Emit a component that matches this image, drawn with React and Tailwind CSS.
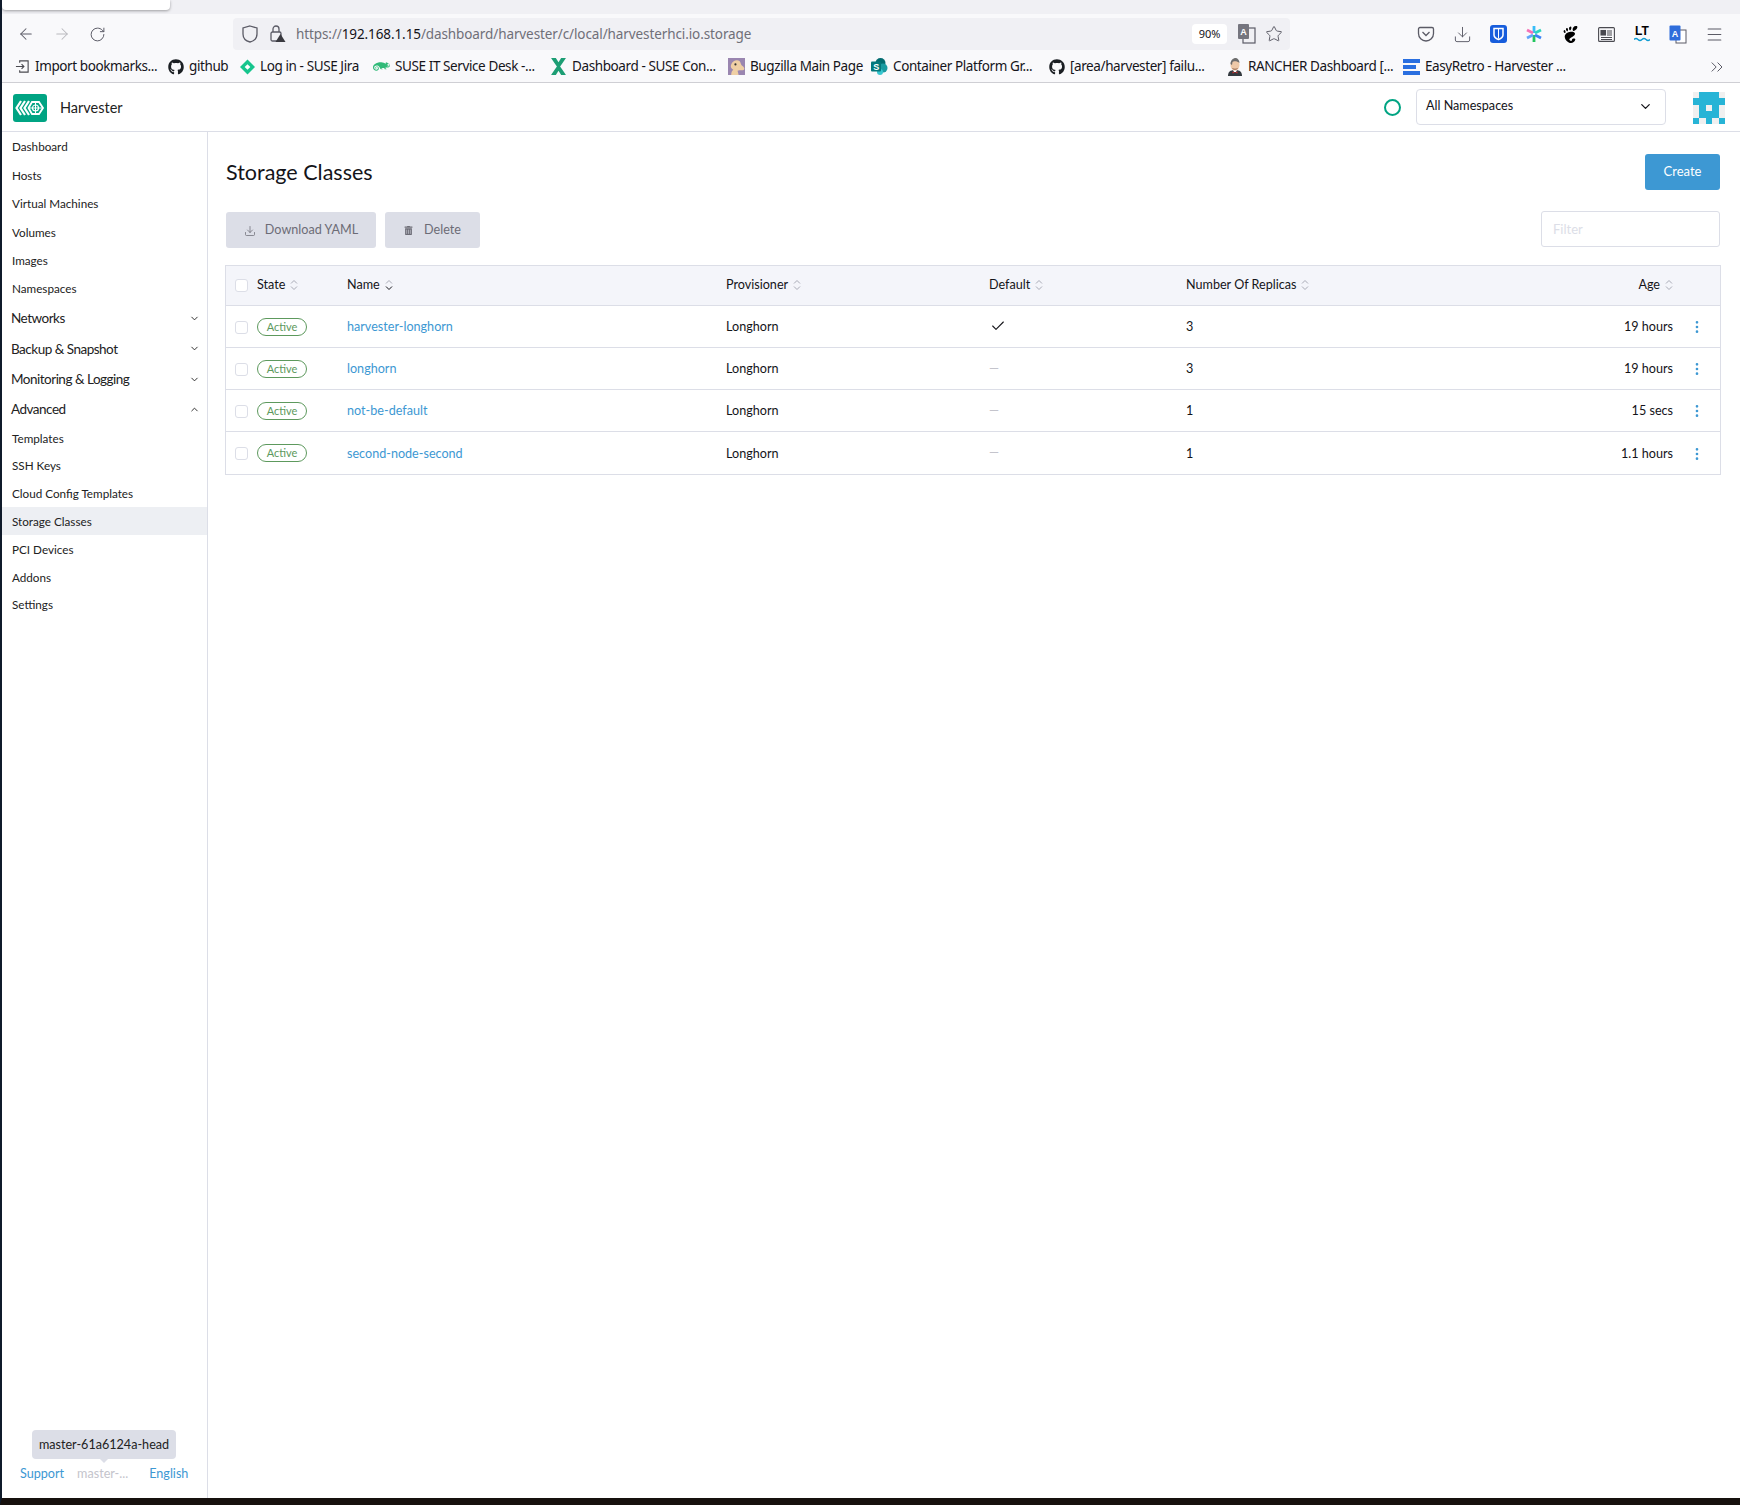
import {
  ArrowLeft,
  ArrowRight,
  Check,
  ChevronDown,
  ChevronUp,
  ChevronsRight,
  Download,
  EllipsisVertical,
  Menu,
  RotateCw,
  Star,
} from "lucide-react";
import { FaGithub, FaTrashAlt } from "react-icons/fa";
import { SiGnome, SiSuse } from "react-icons/si";

const rowCols = "grid grid-cols-[31px_90px_379px_263px_197px_387px_100px_47px] items-center";

const rows = [
  { name: "harvester-longhorn", isDefault: true, replicas: "3", age: "19 hours" },
  { name: "longhorn", isDefault: false, replicas: "3", age: "19 hours" },
  { name: "not-be-default", isDefault: false, replicas: "1", age: "15 secs" },
  { name: "second-node-second", isDefault: false, replicas: "1", age: "1.1 hours" },
];

function ImportIcon() {
  return (
    <svg width="15" height="15" viewBox="0 0 16 16" fill="none" stroke="#4a4a50" strokeWidth="1.2">
      <path d="M5 4V2h9v12H5v-2" />
      <path d="M1 8h8M7 5.5 9.5 8 7 10.5" />
    </svg>
  );
}

function JiraIcon() {
  return (
    <svg width="15" height="16" viewBox="0 0 16 16">
      <path d="M8 0l8 8-8 8-8-8z" fill="#17c58d" />
      <path d="M8 5l3 3-3 3-3-3z" fill="#fff" />
    </svg>
  );
}

function SuseConIcon() {
  return (
    <svg width="17" height="17" viewBox="0 0 16 16" fill="#1d9e74">
      <path d="M1 0h4.500l2.500 4 2.500-4H15l-3 4.500-2.500 3.500 2.500 3.500 3 4.500h-4.500L8 12l-2.500 4H1l3-4.500L6.500 8 4 4.500z" />
    </svg>
  );
}

function BugzillaIcon() {
  return (
    <svg width="17" height="17" viewBox="0 0 16 16">
      <rect width="16" height="16" fill="#9a86b0" />
      <path d="M3 16c0-3 1-4 2-5-2-1-3-3-2-5 1-3 5-5 8-3 1 1 1 3 2 4 2 1 3 3 2 4-1 1-4 0-6 1l1 4z" fill="#efcfa4" />
      <circle cx="7" cy="6" r="1" fill="#333" />
    </svg>
  );
}

function SharepointIcon() {
  return (
    <svg width="17" height="17" viewBox="0 0 17 17">
      <circle cx="9.500" cy="5" r="5" fill="#036c70" />
      <circle cx="12" cy="10" r="4.500" fill="#1a9ba1" />
      <circle cx="9" cy="14" r="3" fill="#37c6d0" />
      <rect x="0" y="3.500" width="10" height="10" rx="1" fill="#03787c" />
      <text x="5" y="11.500" textAnchor="middle" fontSize="9" fontWeight="700" fill="#fff" fontFamily="Liberation Sans, sans-serif">
        S
      </text>
    </svg>
  );
}

function JenkinsIcon() {
  return (
    <svg width="16" height="18" viewBox="0 0 16 18">
      <path d="M1 18c0-4 2-6 7-6s7 2 7 6z" fill="#33393f" />
      <path d="M6 12h4l-1 2h-2z" fill="#fff" />
      <path d="M5.500 13.500l2.500 1 2.500-1v2l-2.500-1-2.500 1z" fill="#c53030" />
      <ellipse cx="8" cy="7" rx="4.500" ry="5.500" fill="#eec9a8" />
      <path d="M3.500 6c0-4 3-6 5-6s4 2 4 5c-2-2-6-2-7-1l-.5 3z" fill="#6d6d6d" />
      <path d="M5.500 10.500c1.500 1 3.500 1 5 0" stroke="#7a4a35" strokeWidth=".8" fill="none" />
    </svg>
  );
}

function RetroIcon() {
  return (
    <svg width="17" height="16" viewBox="0 0 17 16" fill="#2a6fe0">
      <rect x="0" y="0" width="17" height="4" />
      <rect x="0" y="6" width="13" height="4" />
      <rect x="0" y="12" width="17" height="4" />
    </svg>
  );
}

function Bookmark({ icon, label, width }) {
  return (
    <div className={`flex items-center gap-[5px] shrink-0 overflow-hidden whitespace-nowrap ${width}`}>
      <span className="flex items-center justify-center shrink-0">{icon}</span>
      <span>{label}</span>
    </div>
  );
}

function BrowserChrome() {
  return (
    <div className="bg-[#f9f9fb] text-[#15141a] font-['Noto_Sans',sans-serif]">
      <div className="h-[14px] bg-[#f0f0f4]">
        <div className="h-[10px] w-[168px] rounded-b bg-white shadow-[0_1px_3px_rgba(0,0,0,0.35)]" />
      </div>

      <div className="flex h-[36px] items-center pt-[4px]">
        <div className="flex w-[231px] shrink-0 items-center pl-[15px] gap-[18px] text-[#5b5b66]">
          <ArrowLeft size={18} strokeWidth={1.4} />
          <ArrowRight size={18} strokeWidth={1.4} className="text-[#b9b9be]" />
          <RotateCw size={17} strokeWidth={1.4} />
        </div>
        <div className="flex h-[32px] w-[1057px] items-center rounded bg-[#f0f0f4] pl-[8px] pr-[6px]">
          <svg width="18" height="20" viewBox="0 0 18 20" fill="none" stroke="#5b5b66" strokeWidth="1.3">
            <path d="M9 2l7 2v6c0 4-3 7-7 8-4-1-7-4-7-8V4z" />
          </svg>
          <svg width="18" height="20" viewBox="0 0 18 20" className="ml-[9px]">
            <rect x="3" y="8" width="10" height="9" rx="1.500" fill="none" stroke="#5b5b66" strokeWidth="1.300" />
            <path d="M5 8V5a3 3 0 016 0v3" fill="none" stroke="#5b5b66" strokeWidth="1.300" />
            <path d="M12.500 10l5 8h-10z" fill="#3a3a40" />
          </svg>
          <div className="ml-[10px] whitespace-nowrap text-[13.5px] tracking-[-0.1px] text-[#6f6f78]">
            https://<span className="text-[#15141a]">192.168.1.15</span>/dashboard/harvester/c/local/harvesterhci.io.storage
          </div>
          <div className="ml-auto flex h-[20px] w-[35px] items-center justify-center rounded-sm bg-white text-[11px]">90%</div>
          <svg width="20" height="22" viewBox="0 0 20 22" className="ml-[10px]">
            <rect x="6" y="5" width="12" height="15" fill="none" stroke="#5b5b66" strokeWidth="1.200" />
            <rect x="1" y="1" width="11" height="15" rx="1" fill="#75757e" />
            <text x="6.500" y="12" textAnchor="middle" fontSize="9" fontWeight="700" fill="#fff" fontFamily="Liberation Sans, sans-serif">
              A
            </text>
          </svg>
          <Star size={18} strokeWidth={1.3} className="ml-[8px] mr-[1px] text-[#5b5b66]" />
        </div>
        <div className="ml-[118px] flex items-center">
          <div className="flex w-[36px] justify-center">
            <svg width="18" height="18" viewBox="0 0 18 18" fill="none" stroke="#5b5b66" strokeWidth="1.300">
              <path d="M3 2.500h12a1.500 1.500 0 011.500 1.500v4.500a7.500 7.500 0 01-15 0V4A1.500 1.500 0 013 2.500z" />
              <path d="M5.500 7 9 10.500 12.500 7" />
            </svg>
          </div>
          <div className="flex w-[36px] justify-center">
            <Download size={19} strokeWidth={1.2} className="text-[#5b5b66]" />
          </div>
          <div className="flex w-[36px] justify-center">
            <svg width="17" height="18" viewBox="0 0 17 18">
              <rect width="17" height="18" rx="3" fill="#175ddc" />
              <path d="M4 3.500h9v6.500c0 2-2 3.500-4.500 4.500C6 13.500 4 12 4 10z" fill="none" stroke="#fff" strokeWidth="1.500" />
              <path d="M8.500 4v9.500" stroke="#fff" strokeWidth="1" />
            </svg>
          </div>
          <div className="flex w-[36px] justify-center">
            <svg width="18" height="18" viewBox="0 0 18 18" strokeWidth="2.800">
              <path d="M9 1v7" stroke="#38bdf8" />
              <path d="M9 10v7" stroke="#22c55e" />
              <path d="M2 5l6 3" stroke="#f472b6" />
              <path d="M16 13l-6-3" stroke="#3b82f6" />
              <path d="M16 5l-6 3" stroke="#2dd4bf" />
              <path d="M2 13l6-3" stroke="#60a5fa" />
            </svg>
          </div>
          <div className="flex w-[36px] justify-center">
            <SiGnome size={17} className="text-black" />
          </div>
          <div className="flex w-[36px] justify-center">
            <svg width="17" height="15" viewBox="0 0 17 15" fill="none" stroke="#4a4a50" strokeWidth="1.100">
              <rect x=".6" y=".6" width="15.800" height="13.800" rx="1" />
              <rect x="3" y="3.500" width="4.500" height="4.500" fill="#4a4a50" />
              <path d="M9 4h5M9 6h5M9 8h5M3 10.500h11M3 12.500h11" />
            </svg>
          </div>
          <div className="flex w-[36px] flex-col items-center justify-center leading-none">
            <span className="text-[12px] font-bold leading-[11px] text-black font-['Liberation_Sans',sans-serif]">LT</span>
            <svg width="16" height="5" viewBox="0 0 16 5" fill="none" stroke="#0e9bd1" strokeWidth="1.300">
              <path d="M0 2.500q2-2 4 0t4 0 4 0 4 0" />
            </svg>
          </div>
          <div className="flex w-[36px] justify-center">
            <svg width="18" height="19" viewBox="0 0 18 19">
              <rect x="7" y="5" width="10" height="13" fill="#fff" stroke="#5b5b66" strokeWidth="1" />
              <rect x="0.500" y="0.500" width="11" height="15" rx="1" fill="#2f6ddb" />
              <text x="6" y="11.500" textAnchor="middle" fontSize="9" fontWeight="700" fill="#fff" fontFamily="Liberation Sans, sans-serif">
                A
              </text>
            </svg>
          </div>
          <div className="flex w-[36px] justify-center">
            <Menu size={19} strokeWidth={1.3} className="text-[#5b5b66]" />
          </div>
        </div>
      </div>

      <div className="flex h-[33px] items-center border-b border-[#cfcfd4] pl-[13px] pt-px text-[13.5px] tracking-[-0.4px]">
        <Bookmark width="w-[153px]" icon={<ImportIcon />} label="Import bookmarks..." />
        <Bookmark width="w-[72px]" icon={<FaGithub size={16} className="text-[#1b1f23]" />} label="github" />
        <Bookmark width="w-[133px]" icon={<JiraIcon />} label="Log in - SUSE Jira" />
        <Bookmark width="w-[177px]" icon={<SiSuse size={17} className="text-[#30ba78]" />} label="SUSE IT Service Desk -..." />
        <Bookmark width="w-[178px]" icon={<SuseConIcon />} label="Dashboard - SUSE Con..." />
        <Bookmark width="w-[143px]" icon={<BugzillaIcon />} label="Bugzilla Main Page" />
        <Bookmark width="w-[178px]" icon={<SharepointIcon />} label="Container Platform Gr..." />
        <Bookmark width="w-[178px]" icon={<FaGithub size={16} className="text-[#1b1f23]" />} label="[area/harvester] failu..." />
        <Bookmark width="w-[176px]" icon={<JenkinsIcon />} label="RANCHER Dashboard [..." />
        <Bookmark width="w-[170px]" icon={<RetroIcon />} label="EasyRetro - Harvester ..." />
        <ChevronsRight size={20} strokeWidth={1.2} className="ml-[134px] text-[#5b5b66]" />
      </div>
    </div>
  );
}

function HarvesterLogo() {
  return (
    <div className="flex h-[28px] w-[34px] items-center justify-center rounded-[3px] bg-[#00a483]">
      <svg width="30" height="16" viewBox="0 0 30 16" fill="none" stroke="#fff">
        <path d="M6 1 1.500 8 6 15M10 1 5.500 8 10 15M14 1 9.500 8 14 15" strokeWidth="2.200" />
        <path d="M17 2h7l4 6-4 6h-7l-3.500-6z" strokeWidth="1.800" />
        <path d="M20.500 2v12M13.500 8h14.500" strokeWidth="1" />
        <circle cx="20.500" cy="8" r="3" strokeWidth="1.200" />
      </svg>
    </div>
  );
}

function Avatar() {
  return (
    <svg width="32" height="32" viewBox="0 0 5 5" shapeRendering="crispEdges">
      <rect width="5" height="5" fill="#f0f0f0" />
      <path d="M1 0h3v1h1v1H4v2H3v1H2V4H1V2H0V1h1z" fill="#27b4d6" />
      <rect x="2" y="2" width="1" height="1" fill="#f0f0f0" />
      <rect x="0" y="4" width="1" height="1" fill="#27b4d6" />
      <rect x="4" y="4" width="1" height="1" fill="#27b4d6" />
    </svg>
  );
}

function Header() {
  return (
    <div className="flex h-[49px] items-center border-b border-[#dcdee7] bg-white pt-px">
      <div className="ml-[11px]">
        <HarvesterLogo />
      </div>
      <span className="ml-[13px] text-[14.5px] text-[#222]">Harvester</span>
      <div className="ml-auto h-[17px] w-[17px] rounded-full border-[2.5px] border-[#00a483]" />
      <div className="ml-[15px] -mt-[2px] flex h-[36px] w-[250px] items-center justify-between rounded border border-[#dcdee7] pl-[9px] pr-[12px] text-[12.6px] text-[#141419]">
        All Namespaces
        <ChevronDown size={15} strokeWidth={2} />
      </div>
      <div className="ml-[27px] mr-[15px]">
        <Avatar />
      </div>
    </div>
  );
}

function NavItem({ label, active, height }) {
  return (
    <div className={`flex items-center pl-[10px] pt-[2px] text-[11.7px] text-[#222] ${height} ${active ? "bg-[#edeff3]" : ""}`}>
      {label}
    </div>
  );
}

function NavGroup({ label, open }) {
  return (
    <div className="flex h-[30.3px] items-center justify-between pl-[9px] pr-[7px] pt-[2px] text-[13.5px] tracking-[-0.5px] text-[#222]">
      {label}
      {open ? <ChevronUp size={11} strokeWidth={2} /> : <ChevronDown size={11} strokeWidth={2} />}
    </div>
  );
}

function Sidebar() {
  return (
    <div className="relative flex w-[206px] shrink-0 flex-col border-r border-[#dcdee7] bg-white">
      <NavItem height="h-[28.4px]" label="Dashboard" />
      <NavItem height="h-[28.4px]" label="Hosts" />
      <NavItem height="h-[28.4px]" label="Virtual Machines" />
      <NavItem height="h-[28.4px]" label="Volumes" />
      <NavItem height="h-[28.4px]" label="Images" />
      <NavItem height="h-[28.4px]" label="Namespaces" />
      <NavGroup label="Networks" />
      <NavGroup label="Backup & Snapshot" />
      <NavGroup label="Monitoring & Logging" />
      <NavGroup label="Advanced" open />
      <NavItem height="h-[27.8px]" label="Templates" />
      <NavItem height="h-[27.8px]" label="SSH Keys" />
      <NavItem height="h-[27.8px]" label="Cloud Config Templates" />
      <NavItem height="h-[27.8px]" label="Storage Classes" active />
      <NavItem height="h-[27.8px]" label="PCI Devices" />
      <NavItem height="h-[27.8px]" label="Addons" />
      <NavItem height="h-[27.8px]" label="Settings" />

      <div className="relative mt-auto mb-[14px] flex h-[20px] items-center pl-[18px] text-[12.6px] text-[#3d98d3]">
        <span>Support</span>
        <span className="ml-[13px] text-[#c4c4cc]">master-...</span>
        <span className="ml-[21px]">English</span>
        {/* tooltip over the version text */}
        <div className="absolute left-[30px] top-[-34px] flex h-[29px] w-[144px] items-center justify-center rounded bg-[#dcdee7] pt-px text-[12.6px] text-[#222]">
          master-61a6124a-head
          <div className="absolute bottom-[-4px] left-[67px] h-0 w-0 border-x-[5px] border-t-[5px] border-x-transparent border-t-[#dcdee7]" />
        </div>
      </div>
    </div>
  );
}

function SortIcon({ dark }) {
  return (
    <svg width="8" height="12" viewBox="0 0 8 12" fill="none" strokeWidth="1" className="ml-[5px] shrink-0">
      <path d="M1 4.500 4 1.500l3 3" stroke="#a9abb6" />
      <path d="M1 7.500l3 3 3-3" stroke={dark ? "#141419" : "#a9abb6"} />
    </svg>
  );
}

function Checkbox() {
  return <div className="ml-[9px] h-[13px] w-[13px] rounded-[3px] border border-[#dcdee7] bg-white" />;
}

function HeadCell({ label, dark, right }) {
  return (
    <div className={`flex items-center ${right ? "justify-end" : ""}`}>
      {label}
      <SortIcon dark={dark} />
    </div>
  );
}

function StorageTable() {
  return (
    <div className="mt-[17px] -ml-px -mr-px border border-[#dcdee7] text-[12.6px] text-[#141419]">
      <div className={`${rowCols} h-[40px] border-b border-[#dcdee7] bg-[#f4f5fa]`}>
        <Checkbox />
        <HeadCell label="State" />
        <HeadCell label="Name" dark />
        <HeadCell label="Provisioner" />
        <HeadCell label="Default" />
        <HeadCell label="Number Of Replicas" />
        <HeadCell label="Age" right />
        <div />
      </div>
      {rows.map((row) => (
        <div key={row.name} className={`${rowCols} h-[42px] border-b border-[#dcdee7] pt-px last:border-b-0`}>
          <Checkbox />
          <div>
            <span className="inline-flex h-[18px] w-[50px] items-center justify-center rounded-full border border-[#5d995d] text-[11px] text-[#5d995d]">
              Active
            </span>
          </div>
          <div className="pt-px text-[#3d98d3]">{row.name}</div>
          <div className="pt-px">Longhorn</div>
          <div>
            {row.isDefault ? (
              <Check size={16} strokeWidth={1.6} className="ml-px -mt-[2px]" />
            ) : (
              <span className="text-[#c4c4cc]">—</span>
            )}
          </div>
          <div className="pt-px">{row.replicas}</div>
          <div className="pt-px text-right">{row.age}</div>
          <div className="flex justify-center">
            <EllipsisVertical size={16} strokeWidth={2} className="text-[#3d98d3]" />
          </div>
        </div>
      ))}
    </div>
  );
}

function Content() {
  return (
    <div className="flex-1 bg-white pl-[18px] pr-[20px]">
      <div className="flex items-center justify-between pt-[22px]">
        <h1 className="text-[21.5px] text-[#141419]">Storage Classes</h1>
        <button className="flex h-[36px] w-[75px] items-center justify-center rounded-[3px] bg-[#3d98d3] text-[13px] text-white">
          Create
        </button>
      </div>
      <div className="mt-[21px] flex items-start justify-between">
        <div className="mt-px flex gap-[9px] text-[12.6px] text-[#6c6c76]">
          <button className="flex h-[36px] w-[150px] items-center justify-center gap-[9px] rounded-[3px] bg-[#dcdee7] pt-px">
            <Download size={12} strokeWidth={1.5} />
            Download YAML
          </button>
          <button className="flex h-[36px] w-[95px] items-center justify-center gap-[11px] rounded-[3px] bg-[#dcdee7] pt-px">
            <FaTrashAlt size={9} />
            Delete
          </button>
        </div>
        <input
          placeholder="Filter"
          className="h-[36px] w-[179px] rounded-[3px] border border-[#dcdee7] pl-[11px] text-[13px] outline-none placeholder:text-[#dcdee7]"
        />
      </div>
      <StorageTable />
    </div>
  );
}

export default function App() {
  return (
    <div className="flex h-[1505px] w-[1740px] flex-col overflow-hidden border-l-2 border-b-[7px] border-l-[#0f1a2a] border-b-[#17110e] bg-white font-['Lato',sans-serif]">
      <BrowserChrome />
      <Header />
      <div className="flex min-h-0 flex-1">
        <Sidebar />
        <Content />
      </div>
    </div>
  );
}
